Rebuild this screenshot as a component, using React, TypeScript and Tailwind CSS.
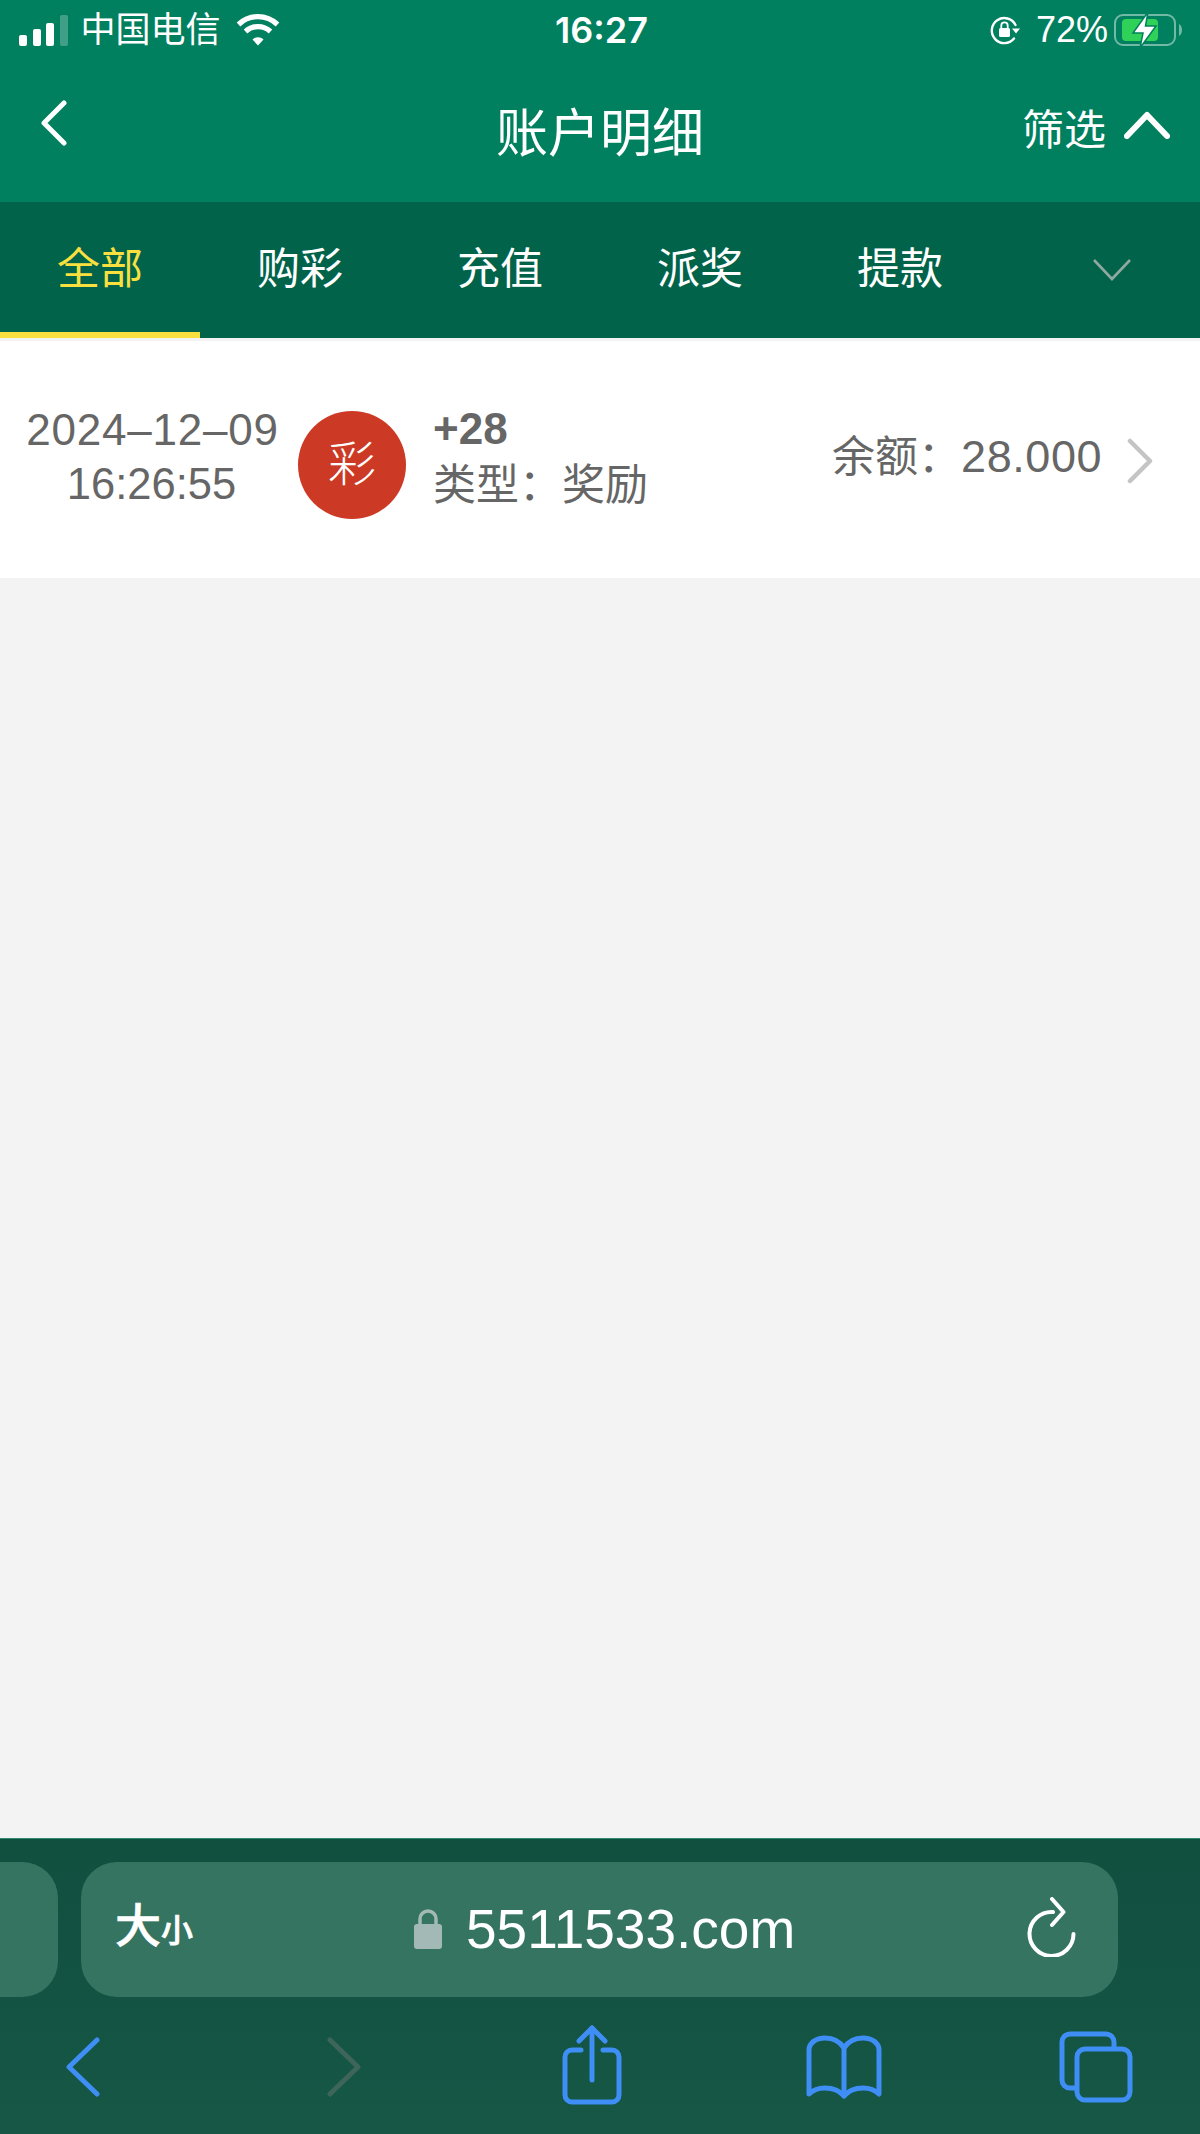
const font = "font-['Liberation_Sans','Noto_Sans_CJK_SC',sans-serif]";

const tabs = ["全部", "购彩", "充值", "派奖", "提款"];

function SignalBars() {
  return (
    <div className="flex items-end gap-[5.5px] h-[31px]">
      <div className="w-[8px] h-[11px] rounded-[2px] bg-white" />
      <div className="w-[8px] h-[17px] rounded-[2px] bg-white" />
      <div className="w-[8px] h-[23px] rounded-[2px] bg-white" />
      <div className="w-[8px] h-[31px] rounded-[2px] bg-white/25" />
    </div>
  );
}

function Wifi() {
  return (
    <svg width="44" height="32" viewBox="0 0 44 32" fill="none" stroke="#fff" strokeWidth="5.2">
      <path d="M2.5 10.5C13.5 0 30.5 0 41.5 10.5" />
      <path d="M9.5 17.5C16.5 11 27.5 11 34.5 17.5" />
      <path d="M16.5 25.5L22 31.5L27.5 25.5C24.5 22.5 19.5 22.5 16.5 25.5Z" fill="#fff" stroke="none" />
    </svg>
  );
}

function RotationLock() {
  return (
    <svg width="32" height="32" viewBox="0 0 32 32" fill="none">
      <path d="M25 24.5A12.5 12.5 0 1 1 26.5 11" stroke="#fff" strokeWidth="2.4" strokeLinecap="round" />
      <path d="M23 14.5H31L27 19.5Z" fill="#fff" />
      <rect x="10" y="14" width="11" height="9" rx="1.5" fill="#fff" />
      <path d="M12.3 14V11.5a3.2 3.2 0 0 1 6.4 0V14" stroke="#fff" strokeWidth="1.8" />
    </svg>
  );
}

function Battery() {
  return (
    <svg width="70" height="36" viewBox="0 0 70 36" fill="none">
      <rect x="1" y="3" width="60" height="30" rx="8" stroke="#fff" strokeOpacity="0.45" strokeWidth="2" />
      <path d="M65 12C67 13 68 15.500 68 18C68 20.500 67 23 65 24Z" fill="#fff" fillOpacity="0.45" />
      <rect x="8" y="7" width="36" height="22" rx="4" fill="#30d158" />
      <path d="M34 0L19 21H29L26 36L42 14H31.500Z" fill="#fff" stroke="#00805f" strokeWidth="1.5" />
    </svg>
  );
}

function StatusBar() {
  return (
    <div className="grid grid-cols-3 items-center h-[60px] pl-[19px] pr-[16px] text-white">
      <div className="flex items-center">
        <SignalBars />
        <span className="ml-[13px] text-[35px] leading-[40px]">中国电信</span>
        <span className="ml-[15px] flex"><Wifi /></span>
      </div>
      <div className="text-center font-['Inter',sans-serif] text-[36px] leading-[40px] font-semibold">16:27</div>
      <div className="flex items-center justify-end">
        <RotationLock />
        <span className="ml-[15px] text-[36px] leading-[40px]">72%</span>
        <span className="ml-[6px] flex"><Battery /></span>
      </div>
    </div>
  );
}

function NavBar() {
  return (
    <div className="grid grid-cols-3 items-start px-[40px] text-white">
      <svg className="mt-[40px]" width="28" height="46" viewBox="0 0 28 46" fill="none" stroke="#fff" strokeWidth="5" strokeLinecap="round" strokeLinejoin="round">
        <path d="M24 3L4 23L24 43" />
      </svg>
      <div className="mt-[41px] text-center text-[52px] leading-[66px]">账户明细</div>
      <div className="flex justify-end items-start -mr-[10px]">
        <span className="mt-[44px] text-[42px] leading-[54px]">筛选</span>
        <svg className="mt-[51px] ml-[18px]" width="46" height="28" viewBox="0 0 46 28" fill="none" stroke="#fff" strokeWidth="6" strokeLinecap="round" strokeLinejoin="round">
          <path d="M3 25L23 4L43 25" />
        </svg>
      </div>
    </div>
  );
}

function TabBar() {
  return (
    <div className="flex h-[136px] bg-[#01634a] text-[43px] leading-[54px]">
      {tabs.map((t, i) => (
        <div
          key={t}
          className={`w-[200px] flex items-center justify-center pt-[4px] border-b-[6px] ${
            i === 0 ? "border-[#f9e03f] text-[#f9e03f]" : "border-transparent text-white"
          }`}
        >
          {t}
        </div>
      ))}
      <div className="flex-1 flex justify-center items-start pl-[24px] pt-[56px]">
        <svg width="40" height="24" viewBox="0 0 40 24" fill="none" stroke="#8fa8a0" strokeWidth="2.6">
          <path d="M2 2L20 21L38 2" />
        </svg>
      </div>
    </div>
  );
}

function RecordRow() {
  return (
    <div className="flex items-center h-[237px] mt-[3px] bg-white text-[#666] text-[44px]">
      <div className="w-[298px] pl-[26px] pr-[19px] text-center leading-[55px] whitespace-nowrap -mt-[6px]">
        <div className="tracking-[0.8px]">2024–12–09</div>
        <div className="text-[43.5px] -translate-x-[1px]">16:26:55</div>
      </div>
      <div className="w-[108px] h-[108px] mt-[10px] rounded-full bg-[#cc3a26] text-white text-[48px] font-light flex items-center justify-center">
        彩
      </div>
      <div className="ml-[27px] w-[380px] -mt-[5px] leading-[56px]">
        <div className="font-bold">+28</div>
        <div className="text-[43px]">类型：奖励</div>
      </div>
      <div className="ml-[19px] -mt-[5px] whitespace-nowrap flex items-baseline">
        <span className="text-[43px]">余额：</span>
        <span className="text-[45px] tracking-[0.6px]">28.000</span>
      </div>
      <svg className="ml-[24px] mt-[2px]" width="28" height="46" viewBox="0 0 28 46" fill="none" stroke="#c4c4c4" strokeWidth="4.5" strokeLinecap="round" strokeLinejoin="round">
        <path d="M4 3L24 23L4 43" />
      </svg>
    </div>
  );
}

function BottomBar() {
  return (
    <div className="h-[296px] bg-gradient-to-b from-[#114f3f] to-[#165746] border-t border-[#2d8a6c] pt-[23px]">
      <div className="flex h-[135px]">
        <div className="w-[58px] rounded-r-[36px] bg-[#367462]" />
        <div className="ml-[23px] w-[1037px] rounded-[36px] bg-[#367462] flex items-center text-white">
          <div className="ml-[34px] w-[298px] flex items-baseline font-medium whitespace-nowrap -mt-[3px] [-webkit-text-stroke:0.7px_white]">
            <span className="text-[46px] leading-[54px]">大</span>
            <span className="text-[32px] leading-[54px]">小</span>
          </div>
          <svg className="-mt-[4px]" width="30" height="42" viewBox="0 0 30 42" fill="none">
            <path d="M7 20V12a8 8 0 0 1 16 0V20" stroke="#a3b9b5" strokeWidth="3.500" />
            <rect x="1" y="17" width="28" height="25" rx="3" fill="#a3b9b5" />
          </svg>
          <span className="ml-[23px] text-[55px] leading-[64px] -mt-[2px]">5511533.com</span>
          <svg className="ml-[232px] -mt-[6px]" width="50" height="60" viewBox="0 0 50 60" fill="none" stroke="#fff" strokeWidth="4" strokeLinecap="round" strokeLinejoin="round">
            <path d="M46.500 37A22 22 0 1 1 26 15" />
            <path d="M25 2L36.500 15L25 28" />
          </svg>
        </div>
      </div>
      <div className="flex items-center pt-[32px] pl-[66px]">
        <svg width="34" height="60" viewBox="0 0 34 60" fill="none" stroke="#3f8ef5" strokeWidth="5" strokeLinecap="round" strokeLinejoin="round">
          <path d="M31 3L3 30L31 57" />
        </svg>
        <svg className="ml-[227px]" width="34" height="60" viewBox="0 0 34 60" fill="none" stroke="#3d6559" strokeWidth="5" strokeLinecap="round" strokeLinejoin="round">
          <path d="M3 3L31 30L3 57" />
        </svg>
        <svg className="ml-[201px] -mt-[4px]" width="60" height="80" viewBox="0 0 60 80" fill="none" stroke="#3f8ef5" strokeWidth="5" strokeLinecap="round" strokeLinejoin="round">
          <path d="M19 25H10a7 7 0 0 0-7 7V70a7 7 0 0 0 7 7H50a7 7 0 0 0 7-7V32a7 7 0 0 0-7-7H41" />
          <path d="M30 55V3" />
          <path d="M17 16L30 3L43 16" />
        </svg>
        <svg className="ml-[184px]" width="76" height="64" viewBox="0 0 76 64" fill="none" stroke="#3f8ef5" strokeWidth="5" strokeLinecap="round" strokeLinejoin="round">
          <path d="M38 13V61" />
          <path d="M38 13C33 5 26 3 19 3C10 3 3 8 3 15V59C8 54 13 53 19 53C27 53 33 55 38 61C43 55 49 53 57 53C63 53 68 54 73 59V15C73 8 66 3 57 3C50 3 43 5 38 13Z" />
        </svg>
        <svg className="ml-[177px]" width="74" height="72" viewBox="0 0 74 72" fill="none" stroke="#3f8ef5" strokeWidth="5" strokeLinejoin="round">
          <path d="M18 57H11a8 8 0 0 1-8-8V11a8 8 0 0 1 8-8H47a8 8 0 0 1 8 8V18" />
          <rect x="18" y="18" width="53" height="51" rx="8" />
        </svg>
      </div>
    </div>
  );
}

export default function App() {
  return (
    <div className={`${font} flex flex-col h-[2134px] w-[1200px] bg-[#f3f3f3] overflow-hidden`}>
      <div className="h-[202px] bg-[#00805f]">
        <StatusBar />
        <NavBar />
      </div>
      <TabBar />
      <RecordRow />
      <div className="flex-1" />
      <BottomBar />
    </div>
  );
}
